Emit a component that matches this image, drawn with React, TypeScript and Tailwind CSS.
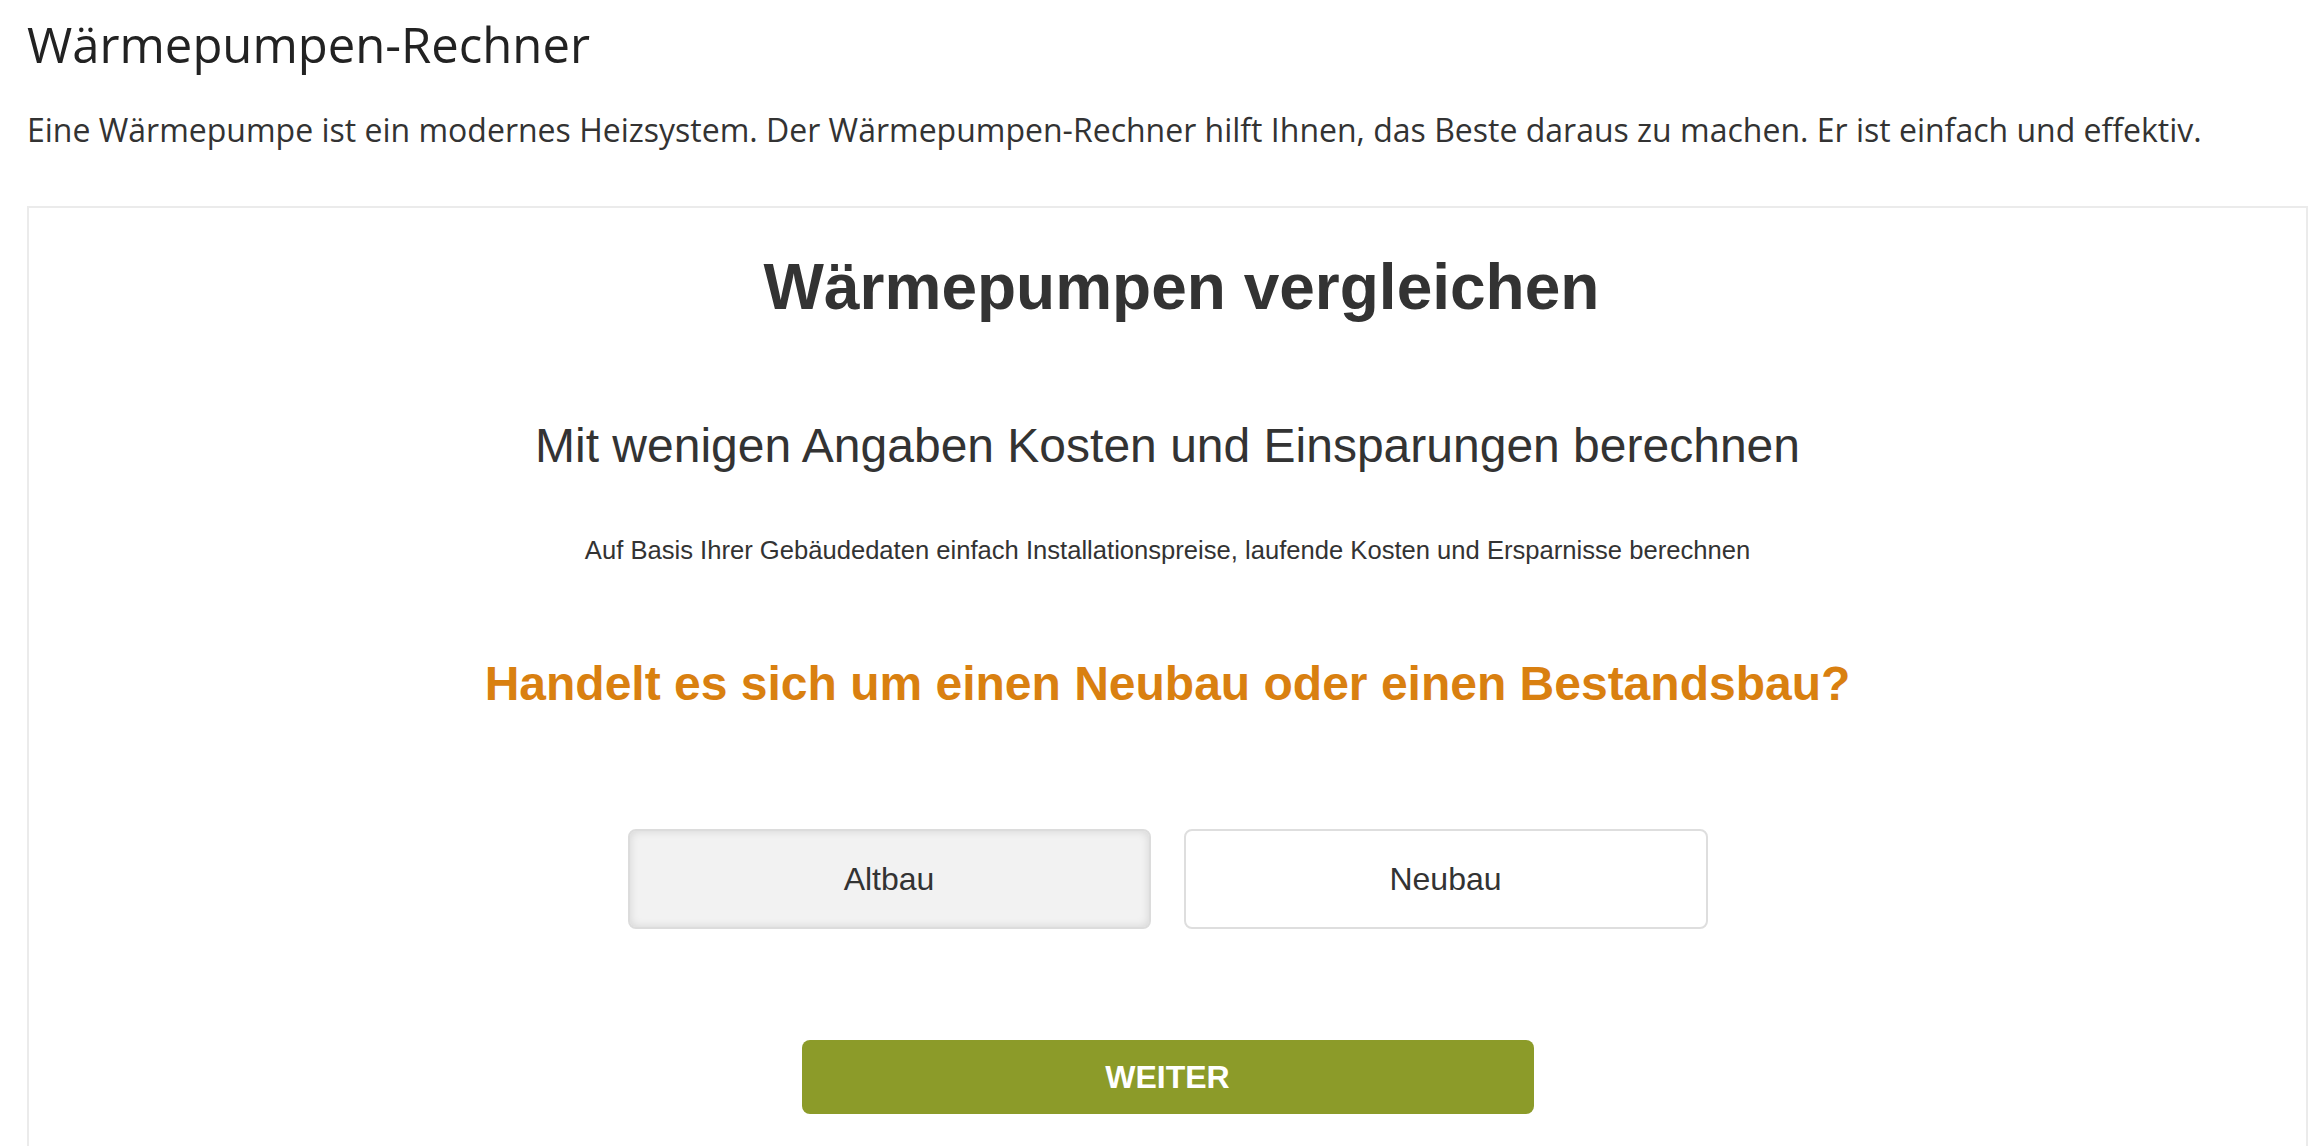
import React from "react";

export default function App() {
  return (
    <div className="min-h-screen bg-white pl-[27px] pr-[10px] pt-[15px] font-['Open_Sans',sans-serif]">
      <h1 className="text-[49px] font-medium leading-[1.2] text-[#222]">Wärmepumpen-Rechner</h1>
      <p className="mt-[32px] text-[32px] leading-[1.5] text-[#333]">
        Eine Wärmepumpe ist ein modernes Heizsystem. Der Wärmepumpen-Rechner hilft Ihnen, das Beste daraus zu machen. Er ist einfach und effektiv.
      </p>
      <div className="mt-[52px] border-2 border-[#ebebeb] bg-white pt-[41px] pb-[60px] text-center font-['Liberation_Sans',Arial,sans-serif] text-[#333]">
        <h2 className="pl-[28px] text-[64px] font-bold leading-[1.2]">Wärmepumpen vergleichen</h2>
        <h3 className="mt-[91px] text-[48px] leading-[1.2]">Mit wenigen Angaben Kosten und Einsparungen berechnen</h3>
        <p className="mt-[61px] text-[25.6px] leading-[1.2]">
          Auf Basis Ihrer Gebäudedaten einfach Installationspreise, laufende Kosten und Ersparnisse berechnen
        </p>
        <h4 className="mt-[89px] text-[48px] font-bold leading-[1.2] text-[#d98010]">
          Handelt es sich um einen Neubau oder einen Bestandsbau?
        </h4>
        <div className="mt-[117px] flex justify-center gap-[33px]">
          <button className="h-[100px] w-[523px] rounded-[8px] border-2 border-[#dcdcdc] bg-[#f2f2f2] text-[32px] text-[#333] shadow-[inset_0_0_10px_rgba(0,0,0,0.12)]">
            Altbau
          </button>
          <button className="h-[100px] w-[524px] rounded-[8px] border-2 border-[#dedede] bg-white text-[32px] text-[#333]">
            Neubau
          </button>
        </div>
        <div className="mt-[111px] flex justify-center">
          <button className="h-[74px] w-[732px] rounded-[8px] bg-[#8c9b29] text-[32px] font-bold text-white">WEITER</button>
        </div>
      </div>
    </div>
  );
}
